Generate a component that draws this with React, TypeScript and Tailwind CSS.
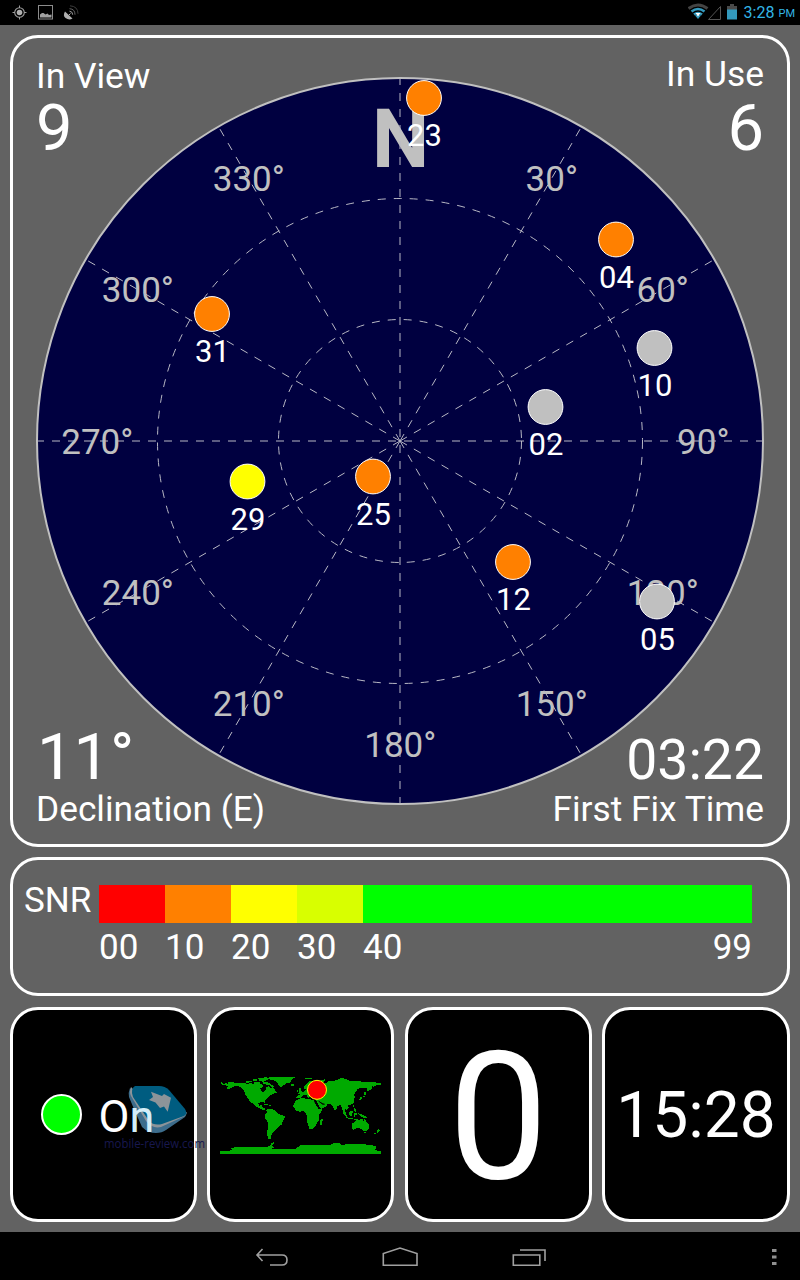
import type { ReactNode } from "react"

const CX = 400
const CY = 441
const RADIUS = 363

const headings = [0, 30, 60, 90, 120, 150, 180, 210, 240, 270, 300, 330]

const satellites = [
  { id: "23", x: 424, y: 98, color: "#ff8000" },
  { id: "04", x: 616, y: 239.5, color: "#ff8000" },
  { id: "10", x: 654.5, y: 348, color: "#c0c0c0" },
  { id: "02", x: 545.5, y: 407, color: "#c0c0c0" },
  { id: "31", x: 212, y: 314, color: "#ff8000" },
  { id: "29", x: 247.5, y: 481.5, color: "#ffff00" },
  { id: "25", x: 373, y: 476.5, color: "#ff8000" },
  { id: "12", x: 513, y: 562, color: "#ff8000" },
  { id: "05", x: 657, y: 601.5, color: "#c0c0c0" },
]

const snrBands = [
  { label: "00", className: "w-[66px] bg-[#ff0000]" },
  { label: "10", className: "w-[66px] bg-[#ff8000]" },
  { label: "20", className: "w-[66px] bg-[#ffff00]" },
  { label: "30", className: "w-[66px] bg-[#d8ff00]" },
  { label: "40", className: "flex-1 bg-[#00ff00]" },
]

function polar(deg: number, r: number) {
  const a = (deg * Math.PI) / 180
  return { x: CX + r * Math.sin(a), y: CY - r * Math.cos(a) }
}

function SkyPlot() {
  return (
    <svg viewBox="10 35 780 812" className="absolute -top-[3px] -left-[3px] h-[812px] w-[780px]">
      <circle cx={CX} cy={CY} r={RADIUS} fill="#000040" stroke="#c0c0c0" strokeWidth="2" />
      {headings.map((deg) => {
        const p = polar(deg, 303)
        return deg === 0 ? (
          <text key={deg} x={400.5} y={167} textAnchor="middle" fill="#c0c0c0" fontSize="81" fontWeight="700">
            N
          </text>
        ) : (
          <text key={deg} x={p.x + 0.3} y={p.y + 12.5} textAnchor="middle" fill="#c0c0c0" fontSize="35">
            {deg}°
          </text>
        )
      })}
      <g stroke="#b8b8c4" strokeWidth="1" fill="none" strokeDasharray="8 8">
        <circle cx={CX} cy={CY} r="121.5" />
        <circle cx={CX} cy={CY} r="242.5" />
        {headings.map((deg) => {
          const p = polar(deg, RADIUS)
          return <line key={deg} x1={CX} y1={CY} x2={p.x} y2={p.y} strokeDashoffset={deg % 90 === 0 ? 12 : 0} />
        })}
      </g>
      {satellites.map((s) => (
        <g key={s.id}>
          <circle cx={s.x} cy={s.y} r="17.4" fill={s.color} stroke="#fff" strokeWidth="1" />
          <text x={s.x + 0.4} y={s.y + 48} textAnchor="middle" fill="#fff" fontSize="31">
            {s.id}
          </text>
        </g>
      ))}
    </svg>
  )
}

function WorldMap() {
  return (
    <svg viewBox="45 40 483 242" className="mb-[2px] h-[81px] w-[161px] overflow-visible">
      <g fill="#00aa00" shapeRendering="crispEdges">
        {/* north america */}
        <path d="M45 69L51 67 55 73 64 70 68 74 71 65 88 68 104 69 116 68 126 72 137 70 150 74 165 71 175 76 172 82 166 86 168 92 174 98 180 94 184 82 192 79 199 86 206 84 211 92 215 98 205 102 196 106 190 112 184 118 180 123 179 131 174 126 165 127 160 131 163 138 170 135 172 142 178 144 181 150 172 149 162 144 152 139 144 132 134 124 126 112 120 104 118 94 112 86 102 80 90 79 80 84 70 88 64 84 72 78 52 76Z" />
        <path d="M125 62h16v5h-10v3h-8zM143 57h14v5h-14zM144 66h20v5h-16zM160 56l24-4 10 4-12 6h-20zM170 64l14 2 12 6 12 8-4 4-12-8-16-4zM178 132h12v3h-12zM191 136h8v3h-8z" />
        <path d="M180 54L202 52 226 50 250 52 269 53 260 60 256 68 245 70 236 76 229 82 221 76 216 67 206 61 190 58ZM256 72h12v5h-9z" />
        {/* south america */}
        <path d="M184 150L192 146 204 149 214 155 222 163 238 168 240 174 234 182 230 194 222 199 216 207 210 213 204 219 198 226 198 236 190 236 186 225 188 208 190 195 188 186 180 174 180 164 185 158Z" />
        {/* africa */}
        <path d="M274 121L285 116 300 114 303 119 312 118 328 121 332 134 340 146 353 146 350 154 342 164 343 178 337 188 330 200 324 206 314 208 310 196 306 184 307 172 302 160 296 153 284 156 274 152 265 142 266 132ZM346 180l8-4-3 18h-6z" />
        {/* europe and asia */}
        <path d="M276 108L284 106 288 100 296 95 302 89 297 86 296 80 304 73 314 64 330 66 345 70 358 72 372 64 384 65 396 60 412 56 424 58 436 64 456 63 478 67 500 66 528 70 528 77 515 75 506 81 500 79 502 86 492 93 485 94 488 84 470 83 456 88 456 94 450 98 448 106 452 114 446 116 448 127 440 133 430 136 431 144 424 150 419 145 420 154 424 164 418 161 412 148 407 136 398 138 394 149 388 151 382 138 374 132 362 131 368 136 362 141 350 147 343 140 336 126 330 118 322 117 322 110 314 110 310 115 304 105 296 106 290 112 280 116 274 114Z" />
        <path d="M282 84h6v8l4 6-3 3h-10l4-6zM275 91h5v6h-5zM300 54h22v4h-22zM348 62l12-4v4l-8 6zM404 53h12v3h-12zM478 95h4v10h-4zM474 108h6v4h-6zM467 112l6-2-2 8-10 5v-4zM444 136h4v6h-4z" />
        <path d="M413 153l12 12 4 8h-5l-11-14zM428 175h16v3h-16zM432 158l8-6 4 4-4 12-9-2zM447 160h8v4h-4v8h-4zM446 144l6 4 2 8h-5zM462 163l10 1 12 6 6 6-12-2-8-3zM458 158h4v5h-4zM448 177h10v3h-10z" />
        {/* oceania */}
        <path d="M441 191L449 187 456 180 462 181 466 176 474 178 475 184 480 176 484 186 492 195 491 206 484 213 474 213 469 207 458 204 444 210 440 206ZM478 216h6v4h-6zM520 208l5 4-8 7-3-3zM514 217l-3 7-5-2z" />
        {/* antarctica */}
        <path d="M45 282V274L68 273 84 271 78 266 92 262 130 261 160 263 186 261 196 257 200 250 208 245 206 252 200 257 206 263 198 267 214 269 240 266 272 266 286 257 310 255 340 254 372 256 388 250 404 249 410 255 440 252 470 252 496 256 515 259 511 265 515 268 506 270 528 274V282Z" />
      </g>
      <path d="M328 124l14 22M341 124l12 9 6 0" stroke="#000" strokeWidth="3" />
      <circle cx="336" cy="90" r="28.5" fill="#ff0000" stroke="#ffff00" strokeWidth="3" />
    </svg>
  )
}

function Watermark() {
  return (
    <svg viewBox="100 1080 110 74" className="absolute top-[70px] left-[87px] h-[74px] w-[110px] overflow-visible">
      <path d="M130 1088q-2 5-1 9l5 12 8 18q6 6 14 6 6 0 10-3l19-13 2-4-25 10z" fill="#3d6d8c" />
      <path d="M131 1087q-2 5 0 9l15 25q6 8 15 6l24-11 2-4-24 8z" fill="#8c9499" />
      <path d="M135 1086h24q6 0 10 4l16 19q3 5-1 7l-22 8q-8 2-13-3l-16-24q-3-8 2-11z" fill="#005c80" />
      <path d="M151 1091.700L162 1096 164 1094 171 1097.700 167.700 1111.700 164 1106.500 160 1108 155.500 1102.500 149 1100 153 1097z" fill="#8c9499" />
      <text x="104" y="1148" fill="#18184f" fontSize="13" textLength="101" lengthAdjust="spacingAndGlyphs" fontFamily="Open Sans, sans-serif">
        mobile-review.com
      </text>
    </svg>
  )
}

function Tile({ children }: { children: ReactNode }) {
  return (
    <div className="relative flex h-[215px] w-[187px] items-center justify-center rounded-[28px] border-[3px] border-white bg-black last:w-[188px]">
      {children}
    </div>
  )
}

function StatusBar() {
  return (
    <header className="flex h-[25px] items-center justify-between bg-black">
      <svg viewBox="0 0 90 25" className="h-[25px] w-[90px]" fill="none" stroke="#a0a0a0">
        <circle cx="19.5" cy="12.5" r="4.8" strokeWidth="1.1" />
        <circle cx="19.5" cy="12.5" r="2.8" fill="#b0b0b0" stroke="none" />
        <path d="M19.500 5.500v2.500M19.500 17v2.500M12.500 12.500h2.500M24 12.500h2.500" />
        <rect x="38.500" y="5.500" width="14" height="13.500" stroke="#8c8c8c" />
        <path d="M40 17.500v-3l2-1.500 1.500 0 2 1.500 2-1 1.500 1.500 2.500-.500v3z" fill="#a0a0a0" stroke="none" />
        <path d="M65 11.500q-2.500 4 .500 6.500 3.500 2.500 7 .5z" fill="#b0b0b0" stroke="none" />
        <path d="M68.500 15.500l2-2" stroke="#b0b0b0" />
        <path d="M69.500 11.200q3.200 .300 3.200 3.500" stroke="#a0a0a0" />
        <path d="M69.500 8.700q5.500 .300 5.500 6" stroke="#666" />
        <path d="M70 5.800q8 .500 8 8" stroke="#3c3c3c" />
      </svg>
      <div className="flex items-center pr-[5px] text-[#33b5e5]">
        <svg viewBox="0 0 52 25" className="mr-[4px] h-[25px] w-[52px]" fill="none">
          <path d="M0.500 8.500Q10 1.500 19.500 8.500" stroke="#444" strokeWidth="3" />
          <path d="M3.500 11.500Q10 6.500 16.500 11.500M6 14.500Q10 11.500 14 14.500" stroke="#3399bd" strokeWidth="2.600" />
          <path d="M7 15.500Q10 13.500 13 15.500L10 19z" fill="#3399bd" />
          <path d="M7.500 13h5L10 16.500z" fill="#fff" />
          <path d="M20.500 19.500H32.500V6.500z" stroke="#555" />
          <path d="M39 6h3V4h4v2h3v4H39z" fill="#4a4a4a" />
          <path d="M39 9.500h10v10H39z" fill="#3399bd" />
        </svg>
        <span className="pt-[1px] text-[16px]">3:28</span>
        <span className="ml-[4px] pt-[4px] text-[11px]">PM</span>
      </div>
    </header>
  )
}

function NavBar() {
  return (
    <footer className="h-12 bg-black">
      <svg viewBox="0 1232 800 48" className="h-12 w-[800px]" fill="none" stroke="#a0a0a0" strokeWidth="1.600">
        <path d="M262.500 1249l-5.500 6 5.500 6M257 1255h25q5 0 5 5t-5 5h-12" />
        <path d="M383.300 1265.300v-11.800l16.700-5.500 17 5.500v11.800z" />
        <path d="M513.300 1255h26.500v10.300h-26.500zM520 1250h25v11" />
        <path d="M772 1249h4.500v3H772zM772 1255.500h4.500v3H772zM772 1262h4.500v3H772z" fill="#909090" stroke="none" />
      </svg>
    </footer>
  )
}

export default function App() {
  return (
    <div className="flex h-[1280px] w-[800px] flex-col overflow-hidden bg-[#626262] font-['Roboto',sans-serif] text-white">
      <StatusBar />

      <main className="flex flex-1 flex-col px-[10px] pt-[10px]">
        <section className="relative h-[812px] rounded-[28px] border-[3px] border-white">
          <SkyPlot />
          <div className="relative flex h-full flex-col justify-between px-[23px] pt-[20px] pb-[17px]">
            <div className="flex justify-between">
              <div>
                <div className="text-[35.4px] leading-[36px]">In View</div>
                <div className="text-[65px] leading-[69px]">9</div>
              </div>
              <div className="text-right">
                <div className="-mt-[2px] mb-[2px] text-[35.4px] leading-[36px]">In Use</div>
                <div className="text-[65px] leading-[69px]">6</div>
              </div>
            </div>
            <div className="flex items-end justify-between">
              <div>
                <div className="pl-[1px] text-[65px] leading-[67px]">11°</div>
                <div className="text-[35.300px] leading-[36px]">Declination (E)</div>
              </div>
              <div className="text-right">
                <div className="mb-[1px] text-[55.300px] leading-[58px]">03:22</div>
                <div className="text-[35.300px] leading-[36px]">First Fix Time</div>
              </div>
            </div>
          </div>
        </section>

        <section className="mt-[10px] flex h-[139px] rounded-[28px] border-[3px] border-white pt-[25px] pr-[35px] pl-[11px] text-[35px]">
          <div className="w-[75px] leading-[31px]">SNR</div>
          <div className="flex-1">
            <div className="flex h-[38px] w-[653px]">
              {snrBands.map((b) => (
                <div key={b.label} className={b.className} />
              ))}
            </div>
            <div className="mt-[7px] flex w-[653px] leading-[36px]">
              {snrBands.map((b) => (
                <div key={b.label} className="w-[66px]">
                  {b.label}
                </div>
              ))}
              <div className="ml-auto">99</div>
            </div>
          </div>
        </section>

        <section className="mt-[11px] flex gap-[10.400px]">
          <Tile>
            <Watermark />
            <div className="mr-[17px] h-[41px] w-[41px] rounded-full border-2 border-white bg-[#00ff00]" />
            <div className="relative mr-[12px] pt-[3px] text-[45px] leading-none">
              O<span className="text-[#d4eef8]">n</span>
            </div>
          </Tile>
          <Tile>
            <WorldMap />
          </Tile>
          <Tile>
            <div className="pt-[4px] text-[178px] leading-none">0</div>
          </Tile>
          <Tile>
            <div className="pt-[3px] text-[64px] leading-none">15:28</div>
          </Tile>
        </section>
      </main>

      <NavBar />
    </div>
  )
}
